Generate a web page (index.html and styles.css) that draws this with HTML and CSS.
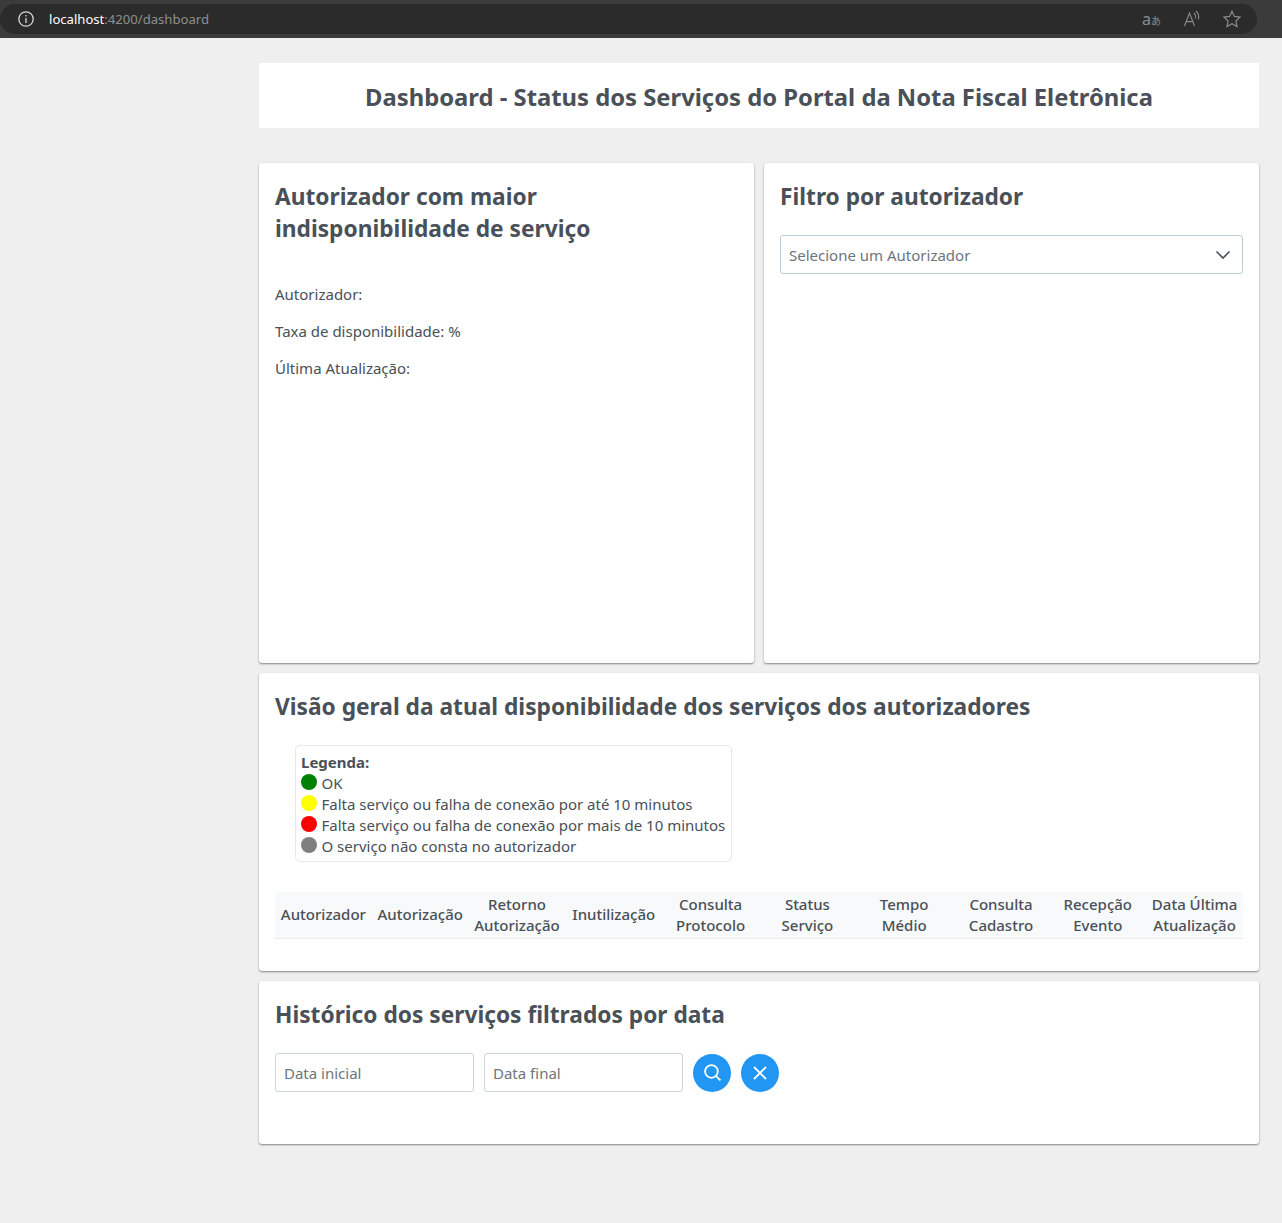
FILE: index.html
```html
<!DOCTYPE html>
<html>
	<head>
		<meta charset="UTF-8">
		<title>Dashboard</title>
		<link rel="stylesheet" href="styles.css">
	</head>
	<body>
		<div class="browser-bar">
			<div class="address">
				<svg class="info-icon" width="18" height="18" viewBox="0 0 18 18" fill="none" stroke="#d8d8d8" stroke-width="1.3">
					<circle cx="9" cy="9" r="7.2"/>
					<path d="M9 8v5"/>
					<path d="M9 5v1.4"/>
				</svg>
				<span class="url"><b>localhost</b>:4200/dashboard</span>
				<div class="bar-icons">
					<span class="translate"><span class="translate-a">a</span>あ</span>
					<svg width="18" height="18" viewBox="0 0 18 18" fill="none" stroke="#8c8c8c" stroke-width="1.1">
						<path d="M1.5 16 6.5 3l5 13M3.2 11.6h6.6"/>
						<path d="M11 3c1.3 1.2 1.9 3 1.6 5.5M13 1c2.2 1.8 3.2 5 2.4 8.5"/>
					</svg>
					<svg width="18" height="18" viewBox="0 0 18 18" fill="none" stroke="#8c8c8c" stroke-width="1.2">
						<path d="M9 1.2l2.4 5.2 5.6.7-4.1 3.9 1.1 5.6L9 13.8l-5 2.8 1.1-5.6L1 7.1l5.6-.7z"/>
					</svg>
				</div>
			</div>
		</div>
		<div class="page">
			<div class="title-box">
				<h1>Dashboard - Status dos Serviços do Portal da Nota Fiscal Eletrônica</h1>
			</div>
			<div class="top-cards">
				<div class="card tall">
					<h2 class="wrapped">Autorizador com maior indisponibilidade de serviço</h2>
					<div class="facts">
						<p>Autorizador:</p>
						<p>Taxa de disponibilidade: %</p>
						<p>Última Atualização:</p>
					</div>
				</div>
				<div class="card tall">
					<h2>Filtro por autorizador</h2>
					<div class="select">
						<span>Selecione um Autorizador</span>
						<svg width="16" height="10" viewBox="0 0 16 10" fill="none" stroke="#48525c" stroke-width="1.6">
							<path d="M1.5 1.5 8 8l6.5-6.5"/>
						</svg>
					</div>
				</div>
			</div>
			<div class="card overview">
				<h2>Visão geral da atual disponibilidade dos serviços dos autorizadores</h2>
				<div class="legend">
					<strong>Legenda:</strong>
					<div class="legend-row"><i class="dot green"></i>OK</div>
					<div class="legend-row"><i class="dot yellow"></i>Falta serviço ou falha de conexão por até 10 minutos</div>
					<div class="legend-row"><i class="dot red"></i>Falta serviço ou falha de conexão por mais de 10 minutos</div>
					<div class="legend-row"><i class="dot gray"></i>O serviço não consta no autorizador</div>
				</div>
				<table>
					<thead>
						<tr>
							<th>Autorizador</th>
							<th>Autorização</th>
							<th>Retorno Autorização</th>
							<th>Inutilização</th>
							<th>Consulta Protocolo</th>
							<th>Status Serviço</th>
							<th>Tempo Médio</th>
							<th>Consulta Cadastro</th>
							<th>Recepção Evento</th>
							<th>Data Última Atualização</th>
						</tr>
					</thead>
				</table>
			</div>
			<div class="card history">
				<h2>Histórico dos serviços filtrados por data</h2>
				<div class="date-row">
					<input class="date-input" type="text" placeholder="Data inicial">
					<input class="date-input" type="text" placeholder="Data final">
					<button class="round-btn">
						<svg width="19" height="19" viewBox="0 0 18 18" fill="none" stroke="#fff" stroke-width="1.7">
							<circle cx="8" cy="8" r="6"/>
							<path d="M12.4 12.4 16.5 16.5"/>
						</svg>
					</button>
					<button class="round-btn">
						<svg width="16" height="16" viewBox="0 0 16 16" fill="none" stroke="#fff" stroke-width="1.8">
							<path d="M2 2l12 12M14 2 2 14"/>
						</svg>
					</button>
				</div>
			</div>
		</div>
	</body>
</html>
```

FILE: styles.css
```css
* {
	box-sizing: border-box;
}
body {
	margin: 0;
	min-height: 1223px;
	background-color: #efefef;
	color: #495057;
	font-family: "Noto Sans", "Open Sans", sans-serif;
	font-size: 15px;
}
.browser-bar {
	height: 38px;
	padding: 4px 25px 4px 0;
	background-color: #3b3b3b;
}
.address {
	display: flex;
	align-items: center;
	height: 30px;
	padding: 0 16px 0 17px;
	border-radius: 15px;
	background-color: #2b2b2b;
	font-size: 13.1px;
	color: #8f8f8f;
}
.url {
	margin-left: 14px;
}
.url b {
	font-weight: normal;
	color: #fff;
}
.bar-icons {
	display: flex;
	align-items: center;
	gap: 22px;
	margin-left: auto;
}
.translate {
	font-size: 10px;
	color: #8c8c8c;
	font-family: "Noto Sans CJK JP", sans-serif;
}
.translate-a {
	font-family: "Noto Sans", sans-serif;
	font-size: 16px;
}
.page {
	display: flex;
	flex-direction: column;
	gap: 10px;
	width: 1000px;
	margin: 25px 23px 0 auto;
}
.title-box {
	height: 65px;
	margin-bottom: 25px;
	background-color: #fff;
	text-align: center;
}
h1 {
	margin: 0;
	font-size: 23.8px;
	line-height: 68px;
	font-weight: 700;
}
h2 {
	margin: 0;
	font-size: 22.72px;
	line-height: 32px;
	font-weight: 700;
}
.wrapped {
	max-width: 400px;
}
.top-cards {
	display: grid;
	grid-template-columns: 1fr 1fr;
	gap: 10px;
}
.card {
	padding: 18px 16px 16px;
	border-radius: 3px;
	background-color: #fff;
	box-shadow: 0 1px 2px rgba(0, 0, 0, 0.45);
}
.tall {
	height: 500px;
}
.facts {
	margin-top: 38px;
}
.facts p {
	margin: 0 0 15px;
	line-height: 22px;
}
.select {
	display: flex;
	align-items: center;
	justify-content: space-between;
	height: 39px;
	margin-top: 22px;
	padding: 0 11px 0 8px;
	border: 1px solid #bccbd8;
	border-radius: 3px;
	color: #6c757d;
}
.overview {
	height: 298px;
}
.legend {
	width: 437px;
	margin: 22px 0 30px 20px;
	padding: 6px 5px 4px;
	border: 1px solid #e6e6f5;
	border-radius: 5px;
	line-height: 21px;
}
.legend strong {
	display: block;
	font-weight: 700;
}
.legend-row {
	display: flex;
	align-items: center;
	white-space: nowrap;
}
.dot {
	flex: none;
	width: 16px;
	height: 16px;
	margin: -3px 4.5px 0 0;
	border-radius: 50%;
}
.green {
	background-color: green;
}
.yellow {
	background-color: yellow;
}
.red {
	background-color: red;
}
.gray {
	background-color: gray;
}
table {
	width: 100%;
	border-collapse: collapse;
	table-layout: fixed;
}
th {
	height: 46px;
	padding: 0 2px;
	border-bottom: 1px solid #e9ecef;
	background-color: #f8f9fa;
	font-weight: 500;
	line-height: 21px;
	text-align: center;
}
.history {
	height: 163px;
}
.date-row {
	display: flex;
	align-items: center;
	gap: 10px;
	margin-top: 22px;
}
.date-input {
	width: 199px;
	height: 39px;
	padding: 0 8px;
	border: 1px solid #ced4da;
	border-radius: 3px;
	font-family: inherit;
	font-size: 15px;
}
.date-input::placeholder {
	color: #6c757d;
}
.round-btn {
	display: flex;
	align-items: center;
	justify-content: center;
	width: 38px;
	height: 38px;
	padding: 0;
	border: none;
	border-radius: 50%;
	background-color: #2196f3;
}
```
